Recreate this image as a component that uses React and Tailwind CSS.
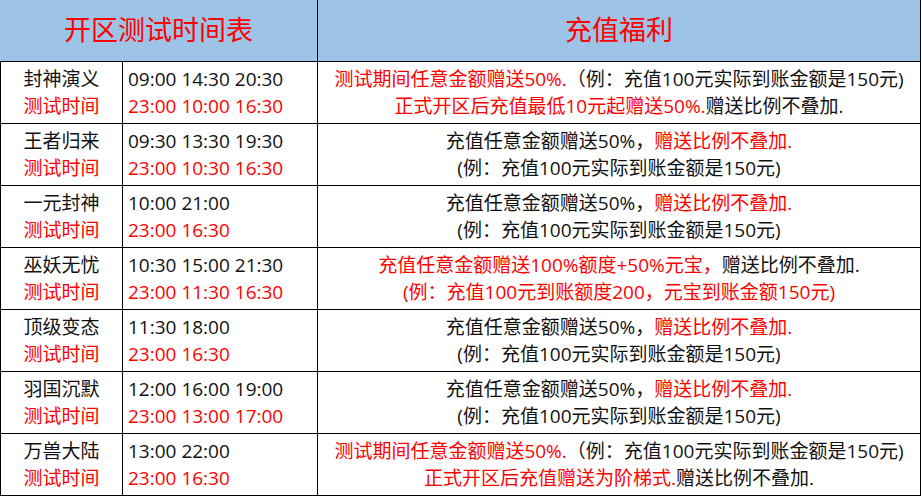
import React from 'react';

const R = ({ children }) => <span className="text-[#ff0000]">{children}</span>;

const commonBenefit = [
    <>充值任意金额赠送50%，<R>赠送比例不叠加.</R></>,
    <>(例：充值100元实际到账金额是150元)</>,
];

const ROWS = [
    {
        name: '封神演义',
        open: '09:00 14:30 20:30',
        test: '23:00 10:00 16:30',
        benefit: [
            <><R>测试期间任意金额赠送50%.</R>（例：充值100元实际到账金额是150元)</>,
            <><R>正式开区后充值最低10元起赠送50%.</R>赠送比例不叠加.</>,
        ],
    },
    { name: '王者归来', open: '09:30 13:30 19:30', test: '23:00 10:30 16:30', benefit: commonBenefit },
    { name: '一元封神', open: '10:00 21:00', test: '23:00 16:30', benefit: commonBenefit },
    {
        name: '巫妖无忧',
        open: '10:30 15:00 21:30',
        test: '23:00 11:30 16:30',
        benefit: [
            <><R>充值任意金额赠送100%额度+50%元宝，</R>赠送比例不叠加.</>,
            <><R>(例：充值100元到账额度200，元宝到账金额150元)</R></>,
        ],
    },
    { name: '顶级变态', open: '11:30 18:00', test: '23:00 16:30', benefit: commonBenefit },
    { name: '羽国沉默', open: '12:00 16:00 19:00', test: '23:00 13:00 17:00', benefit: commonBenefit },
    {
        name: '万兽大陆',
        open: '13:00 22:00',
        test: '23:00 16:30',
        benefit: [
            <><R>测试期间任意金额赠送50%.</R>（例：充值100元实际到账金额是150元)</>,
            <><R>正式开区后充值赠送为阶梯式.</R>赠送比例不叠加.</>,
        ],
    },
];

export default function App() {
    return (
        <div
            className="w-[922px] h-[497px] bg-white text-[#111] overflow-hidden"
            style={{ fontFamily: '"Open Sans", "Noto Sans CJK SC", sans-serif' }}
        >
            <div className="w-[921px] border-r border-b border-black">
                {/* Header */}
                <div className="flex h-[61px] bg-[#9dc3e6] text-[#ff0000] text-[27px]">
                    <div className="w-[318px] border-r border-black flex items-center justify-center">开区测试时间表</div>
                    <div className="flex-1 flex items-center justify-center">充值福利</div>
                </div>

                {ROWS.map((row) => (
                    <div key={row.name} className="flex h-[62px] border-t border-l border-black text-[19px] leading-[27px]">
                        <div className="w-[122px] border-r border-black flex flex-col items-center justify-center">
                            <span>{row.name}</span>
                            <span className="text-[#ff0000]">测试时间</span>
                        </div>
                        <div className="w-[195px] border-r border-black flex flex-col justify-center pl-[5px]">
                            <span>{row.open}</span>
                            <span className="text-[#ff0000]">{row.test}</span>
                        </div>
                        <div className="flex-1 flex flex-col items-center justify-center whitespace-nowrap">
                            <span>{row.benefit[0]}</span>
                            <span>{row.benefit[1]}</span>
                        </div>
                    </div>
                ))}
            </div>
        </div>
    );
}
